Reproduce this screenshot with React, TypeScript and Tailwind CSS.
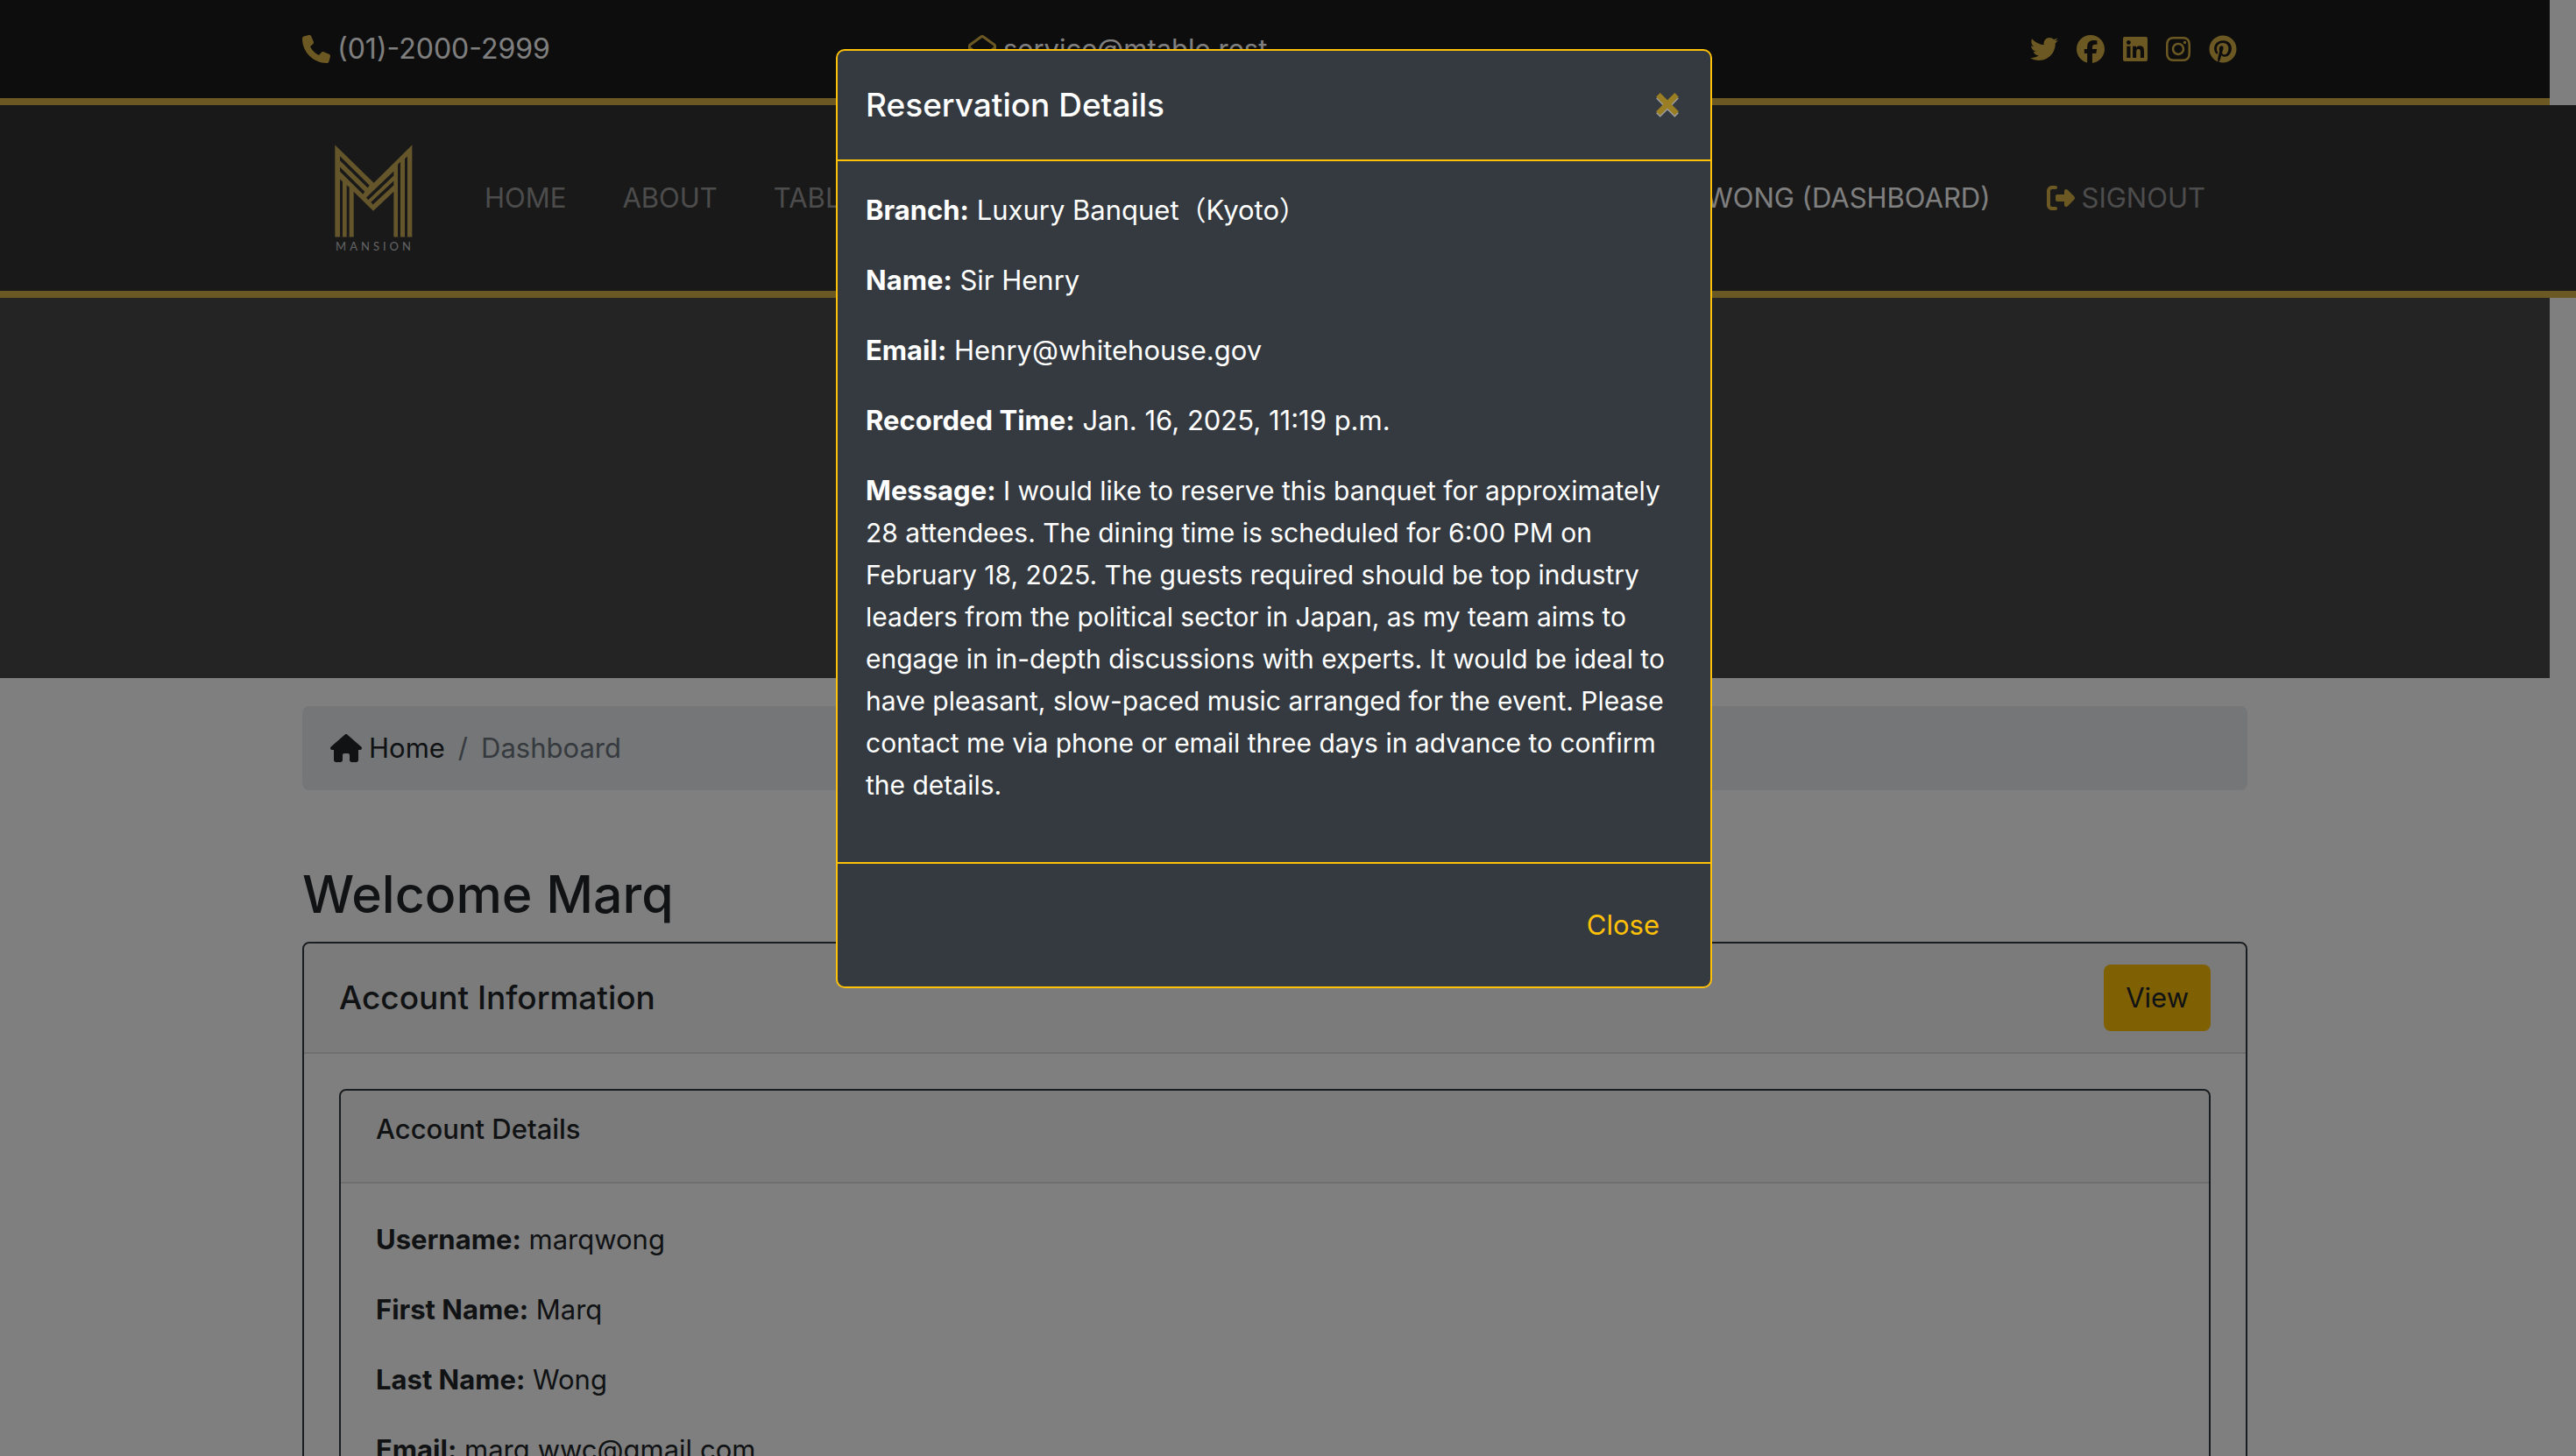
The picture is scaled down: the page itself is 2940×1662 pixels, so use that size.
import type { ReactNode } from "react";
import {
  FaFacebook,
  FaHouse,
  FaInstagram,
  FaLinkedin,
  FaPhone,
  FaPinterest,
  FaRegEnvelopeOpen,
  FaRightFromBracket,
  FaTwitter,
  FaUser,
} from "react-icons/fa6";

const CONTAINER = "mx-auto w-full max-w-[2220px]";

function Logo() {
  return (
    <a href="#home" className="flex w-[90px] flex-col items-center gap-1 text-[#c4c6ca]">
      <svg viewBox="96 44 267 317" className="h-[106px] w-[89px]" aria-hidden="true">
        <path
          fill="#caab54"
          d="M97 45 L230 175 L361 45 V360 H298 V205 L228 271 L161 205 V360 H97 Z"
        />
        <g fill="#333333">
          <path d="M114 162 L123 170 V361 H114 Z" />
          <path d="M137 182 L146 190 V361 H137 Z" />
          <path d="M312 112 L321 103 V361 H312 Z" />
          <path d="M336 92 L345 84 V361 H336 Z" />
          <path d="M114 83 L215 183 L209 192 L114 98 Z" />
          <path d="M114 121 L199 205 L193 214 L114 136 Z" />
          <path d="M298 135 L298 150 L211 233 L204 225 Z" />
          <path d="M298 168 L298 183 L227 249 L220 241 Z" />
        </g>
      </svg>
      <span className="-mr-1 font-[Lato] text-[13px] leading-3 tracking-[4px]">MANSION</span>
    </a>
  );
}

function TopBar() {
  const social = [
    { label: "Twitter", icon: <FaTwitter className="h-8 w-8" /> },
    { label: "Facebook", icon: <FaFacebook className="h-8 w-8" /> },
    { label: "LinkedIn", icon: <FaLinkedin className="h-8 w-7" /> },
    { label: "Instagram", icon: <FaInstagram className="h-8 w-7" /> },
    { label: "Pinterest", icon: <FaPinterest className="h-8 w-8" /> },
  ];
  return (
    <div className="mr-[30px] border-b-8 border-[#d8b046] bg-[#1a1a1a] py-8 text-white">
      <div className={`${CONTAINER} grid grid-cols-3 gap-[60px]`}>
        <a href="tel:0120002999" className="flex items-center gap-2 text-[32px]">
          <FaPhone className="size-8 text-[#d8b046]" />
          (01)-2000-2999
        </a>
        <a href="mailto:service@mtable.rest" className="flex items-center gap-2">
          <FaRegEnvelopeOpen className="size-8 text-[#d8b046]" />
          service@mtable.rest
        </a>
        <div className="flex items-center justify-end gap-[21px] pr-3 text-[#d8b046]">
          {social.map((s) => (
            <a key={s.label} href={"#" + s.label.toLowerCase()} aria-label={s.label}>
              {s.icon}
            </a>
          ))}
        </div>
      </div>
    </div>
  );
}

function NavBar() {
  return (
    <nav className="border-b-8 border-[#d8b046] bg-[#333333] text-[#999999]">
      <div className="mr-[30px]">
        <div className={`${CONTAINER} flex items-center px-9 py-[45px]`}>
          <Logo />
          <div className="ml-[82px] flex gap-16">
            <a href="#home">HOME</a>
            <a href="#about">ABOUT</a>
            <a href="#tables">TABLES</a>
          </div>
          <div className="ml-auto flex gap-16 pr-3">
            <a href="#dashboard" className="flex items-center gap-2 text-white">
              <FaUser className="h-8 w-7 text-[#d8b046]" />
              MARQ WONG (DASHBOARD)
            </a>
            <a href="#signout" className="flex items-center gap-2">
              <FaRightFromBracket className="size-8 text-[#d8b046]" />
              SIGNOUT
            </a>
          </div>
        </div>
      </div>
    </nav>
  );
}

function Field({ label, children }: { label: string; children: ReactNode }) {
  return (
    <p className="mb-8">
      <strong className="text-[31px] font-bold">{label}:</strong> {children}
    </p>
  );
}

function AccountCard() {
  return (
    <section className="mt-4 rounded-lg border-2 border-[#343a40] bg-white">
      <header className="flex items-center justify-between rounded-t-lg border-b-2 border-[#dfdfdf] bg-[#f7f7f7] px-10 py-6">
        <h3 className="text-[37px] leading-[48px] font-medium">Account Information</h3>
        <button type="button" className="rounded-lg bg-[#ffc107] px-[25px] py-[14px]">
          View
        </button>
      </header>
      <div className="p-10">
        <div className="rounded-lg border-2 border-[#343a40]">
          <header className="rounded-t-lg border-b-2 border-[#dfdfdf] bg-[#f7f7f7] px-10 pt-6 pb-10">
            <h4 className="leading-10 font-medium">Account Details</h4>
          </header>
          <div className="p-10">
            <Field label="Username">marqwong</Field>
            <Field label="First Name">Marq</Field>
            <Field label="Last Name">Wong</Field>
            <Field label="Email">marq.wwc@gmail.com</Field>
          </div>
        </div>
      </div>
    </section>
  );
}

function ReservationModal() {
  return (
    <div className="fixed inset-0 bg-black/50 pt-14 pr-8">
      <div
        role="dialog"
        aria-modal="true"
        aria-labelledby="reservation-title"
        className="mx-auto max-w-[1000px] rounded-[10px] border-2 border-[#ffc107] bg-[#343a40] text-white"
      >
        <header className="flex items-start justify-between border-b-2 border-[#ffc107] p-8">
          <h2 id="reservation-title" className="text-[37px] leading-[60px] font-medium">
            Reservation Details
          </h2>
          <button
            type="button"
            aria-label="Close"
            className="text-[50px] leading-[50px] font-bold text-[#ffc107] opacity-50 [text-shadow:0_2px_0_#fff]"
          >
            ×
          </button>
        </header>
        <div className="p-8">
          <Field label="Branch">Luxury Banquet（Kyoto）</Field>
          <Field label="Name">Sir Henry</Field>
          <Field label="Email">Henry@whitehouse.gov</Field>
          <Field label="Recorded Time">Jan. 16, 2025, 11:19 p.m.</Field>
          <div className="text-[30px]">
            <Field label="Message">
              I would like to reserve this banquet for approximately 28 attendees. The dining time
              is scheduled for 6:00 PM on February 18, 2025. The guests required should be top
              industry leaders from the political sector in Japan, as my team aims to engage in
              in-depth discussions with experts. It would be ideal to have pleasant, slow-paced
              music arranged for the event. Please contact me via phone or email three days in
              advance to confirm the details.
            </Field>
          </div>
        </div>
        <footer className="flex justify-end border-t-2 border-[#ffc107] p-8">
          <button type="button" className="px-[26px] py-[14px] text-[#ffc107]">
            Close
          </button>
        </footer>
      </div>
    </div>
  );
}

export default function App() {
  return (
    <div className="h-screen overflow-hidden bg-white font-[Inter,'Noto_Sans_CJK_JP',sans-serif] text-[31px] leading-[48px] text-[#212529]">
      <TopBar />
      <NavBar />
      <div className="mr-[30px] h-[434px] bg-[#484848]" />
      <main className="mr-[30px] pt-8">
        <div className={CONTAINER}>
          <nav
            aria-label="Breadcrumb"
            className="flex items-center gap-[15px] rounded-lg bg-[#e9ecef] px-8 py-6 text-[#6c757d]"
          >
            <a href="#home" className="flex items-center gap-2 text-[#212529]">
              <FaHouse className="h-8 w-9" />
              Home
            </a>
            <span>/</span>
            <span>Dashboard</span>
          </nav>
          <h1 className="mt-20 text-[59px] leading-[77px] font-medium">Welcome Marq</h1>
          <AccountCard />
        </div>
      </main>
      <ReservationModal />
    </div>
  );
}
